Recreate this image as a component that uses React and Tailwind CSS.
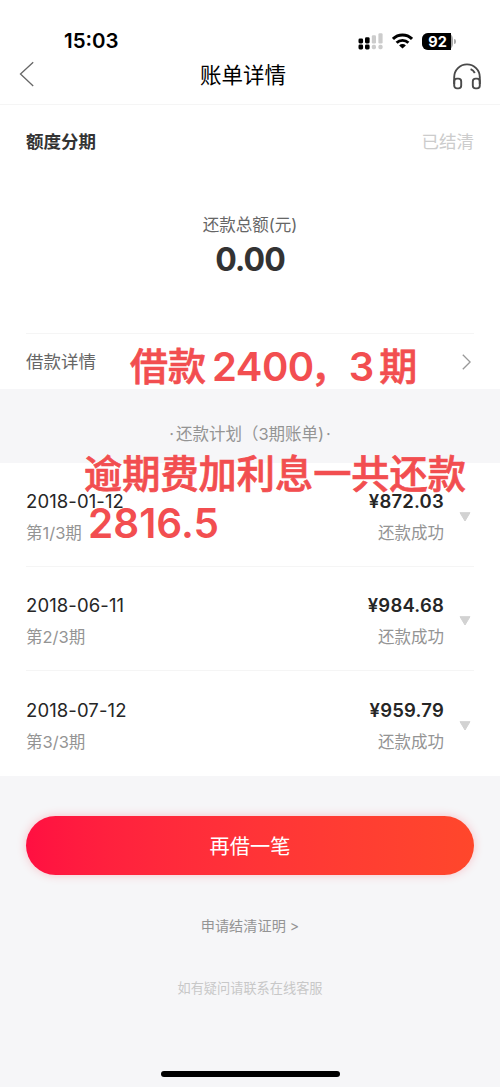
const bills = [
    { date: '2018-01-12', term: '第1/3期', amount: '¥872.03' },
    { date: '2018-06-11', term: '第2/3期', amount: '¥984.68' },
    { date: '2018-07-12', term: '第3/3期', amount: '¥959.79' },
];

const StatusIcons = () => (
    <div className="flex items-center">
        {/* Dual-SIM signal */}
        <svg className="w-[25px] h-[18px]" viewBox="0 0 25 18">
            <g fill="#000">
                <rect x="0.5" y="6.5" width="4.6" height="5" rx="1.4" />
                <rect x="7" y="5.2" width="4.6" height="6.3" rx="1.4" />
                <rect x="0.5" y="12.6" width="4.6" height="4.8" rx="1.4" />
                <rect x="7" y="12.6" width="4.6" height="4.8" rx="1.4" />
            </g>
            <g fill="#cccccc">
                <rect x="13.8" y="3.2" width="4.2" height="8.3" rx="1.2" />
                <rect x="20.4" y="1.2" width="4.2" height="10.3" rx="1.2" />
                <rect x="13.8" y="12.8" width="4.2" height="4.4" rx="1.6" />
                <rect x="20.4" y="12.8" width="4.2" height="4.4" rx="1.6" />
            </g>
        </svg>
        <svg className="w-[21px] h-[16px] ml-[9px]" viewBox="0 0 21 16" fill="none" stroke="#000" strokeWidth="2.9">
            <path d="M1 5.9a13.6 13.6 0 0 1 19 0" />
            <path d="M4.6 9.8a8.5 8.5 0 0 1 11.8 0" />
            <path d="M10.5 15.4 7.1 12.4a4.9 4.9 0 0 1 6.8 0Z" fill="#000" stroke="none" />
        </svg>
        <div className="ml-[9px] flex h-[17px] w-[31px] rounded-[6px] bg-[#a8a8a8]">
            <div className="flex h-full w-[29px] items-center justify-center rounded-l-[6px] bg-black pl-[2px] text-[14.5px] leading-[17px] font-bold text-white">92</div>
        </div>
        <div className="ml-[1px] h-[5px] w-[2px] rounded-r-full bg-[#aaa]"></div>
    </div>
);

const BillRow = ({ date, term, amount, last }) => (
    <div className={last ? 'flex h-[105px] items-center pb-[1px]' : 'flex h-[104px] items-center border-b border-[#f5f5f5]'}>
        <div className="flex-1 pt-[5px]">
            <div className="h-[32px] text-[18.5px] leading-[32px] tracking-[0.1px] text-[#262626]">{date}</div>
            <div className="h-[32px] text-[16.5px] leading-[32px] text-[#949494]">{term}</div>
        </div>
        <div className="pt-[5px] text-right">
            <div className="h-[32px] text-[18.5px] leading-[32px] font-semibold tracking-[0.2px] text-[#262626]">{amount}</div>
            <div className="h-[32px] text-[16.5px] leading-[32px] text-[#949494]">还款成功</div>
        </div>
        <svg className="mt-[5px] ml-[15px] mr-[3px] h-[10px] w-[12px]" viewBox="0 0 12 10">
            <path d="M1 .7h10L6 9Z" fill="#d2d2d2" stroke="#d2d2d2" strokeLinejoin="round" />
        </svg>
    </div>
);

const App = () => {
    return (
        <div className="relative flex h-[1087px] w-[500px] flex-col overflow-hidden bg-[#f6f6f8] font-['Inter','Noto_Sans_CJK_SC',sans-serif]">
            {/* Status bar */}
            <div className="flex h-[56px] shrink-0 items-end justify-between bg-white pr-[44px] pl-[64px]">
                <div className="mb-[3px] h-[24px] text-[20.5px] leading-[24px] font-semibold text-black">15:03</div>
                <div className="mb-[6px]">
                    <StatusIcons />
                </div>
            </div>

            {/* Title bar */}
            <header className="flex h-[49px] shrink-0 items-start justify-between border-b border-[#f5f5f5] bg-white pr-[19px] pl-[19px]">
                <svg className="mt-[5px] h-[26px] w-[28px]" viewBox="0 0 28 26" fill="none" stroke="#666" strokeWidth="1.3">
                    <path d="M14.2 1.2 1.5 13l12.7 12" />
                </svg>
                <h1 className="mr-[14px] h-[37px] text-[21.5px] leading-[38px] text-black">账单详情</h1>
                <svg className="mt-[7px] h-[27px] w-[28px]" viewBox="0 0 28 27" fill="none" stroke="#4a4a4a" strokeWidth="1.9">
                    <path d="M1.2 21V14.2a12.8 12.8 0 0 1 25.6 0V21" />
                    <rect x="1.2" y="15.6" width="7" height="9.8" rx="2.8" />
                    <rect x="19.8" y="15.6" width="7" height="9.8" rx="2.8" />
                    <path d="M17.6 6.2c2 .8 3.3 2 4.2 3.8" />
                </svg>
            </header>

            {/* Summary */}
            <section className="flex h-[284px] shrink-0 flex-col bg-white px-[26px]">
                <div className="flex h-[74px] items-center justify-between text-[17.5px]">
                    <span className="font-bold text-[#333]">额度分期</span>
                    <span className="text-[#ccc]">已结清</span>
                </div>
                <div className="flex flex-1 flex-col items-center border-b border-[#f5f5f5] pt-[32px]">
                    <div className="h-[28px] text-[16.5px] leading-[28px] text-[#666]">还款总额(元)</div>
                    <div className="h-[42px] text-[32px] leading-[42px] font-bold tracking-[-1px] text-[#333]">0.00</div>
                </div>
                <div className="flex h-[55px] items-center justify-between text-[17.5px] text-[#666]">
                    <span className="pt-[2px]">借款详情</span>
                    <svg className="mr-[3px] h-[16px] w-[9px]" viewBox="0 0 9 16" fill="none" stroke="#999" strokeWidth="1.3">
                        <path d="m.8.8 7.3 7.2-7.3 7.2" />
                    </svg>
                </div>
            </section>

            {/* Repayment plan */}
            <div className="flex h-[74px] shrink-0 items-center justify-center pt-[17px] text-[16.5px] text-[#949494]">
                <span className="mr-[2px]">·</span>
                还款计划（3期账单)
                <span className="ml-[2px]">·</span>
            </div>
            <section className="flex h-[313px] shrink-0 flex-col bg-white px-[26px]">
                {bills.map((bill, i) => (
                    <BillRow key={bill.date} {...bill} last={i === bills.length - 1} />
                ))}
            </section>

            {/* Actions */}
            <div className="flex flex-1 flex-col items-center px-[26px] pt-[40px]">
                <button className="h-[59px] w-full shrink-0 rounded-full bg-linear-to-r from-[#ff0f41] to-[#ff472b] pt-[3px] text-[20.2px] text-white shadow-[0_0_10px_rgba(255,40,60,0.25)]">再借一笔</button>
                <div className="mt-[39px] h-[24px] text-[14.2px] leading-[24px] text-[#949494]">申请结清证明 &gt;</div>
                <div className="mt-[38px] h-[24px] text-[13.2px] leading-[24px] text-[#c8c8c8]">如有疑问请联系在线客服</div>
                <div className="mt-auto mb-[10px] h-[6px] w-[179px] rounded-full bg-black"></div>
            </div>

            {/* Notes on top of the page */}
            <div className="absolute top-[343px] left-[130px] flex h-[48px] items-center text-[38px] leading-[48px] font-medium whitespace-nowrap text-[#f24e50]">
                <span className="-mt-[2px] [-webkit-text-stroke:0.7px]">借款</span>
                <span className="ml-[6px] text-[40px] font-semibold tracking-[-0.5px]">2400</span>
                <span className="w-[35px] -translate-x-[3px] [-webkit-text-stroke:0.7px]">，</span>
                <span className="text-[40px] font-semibold">3</span>
                <span className="-mt-[2px] ml-[5px] [-webkit-text-stroke:0.7px]">期</span>
            </div>
            <div className="absolute top-[450px] left-[84px] text-[38.2px] leading-[48px] font-medium whitespace-nowrap text-[#f24e50] [-webkit-text-stroke:0.7px]">逾期费加利息一共还款</div>
            <div className="absolute top-[500px] left-[88px] text-[40.5px] leading-[48px] font-semibold whitespace-nowrap text-[#f24e50]">2816.5</div>
        </div>
    );
};

export default App;
